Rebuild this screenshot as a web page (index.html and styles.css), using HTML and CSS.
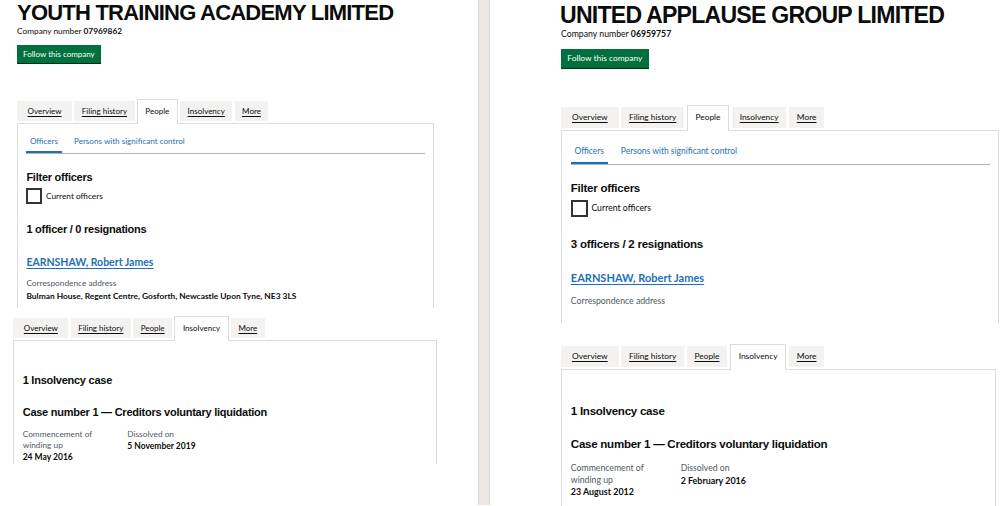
FILE: index.html
```html
<!DOCTYPE html>
<html lang="en">
<head>
<meta charset="utf-8">
<title>Companies House – officers and insolvency</title>
<link rel="stylesheet" href="styles.css">
</head>
<body>
<div class="col col-left">
  <section class="shot shot-a">
    <h1 class="company-name">YOUTH TRAINING ACADEMY LIMITED</h1>
    <p class="company-number">Company number <strong>07969862</strong></p>
    <a class="btn" href="#">Follow this company</a>
    <nav class="tabs">
      <a class="tab" href="#">Overview</a>
      <a class="tab" href="#">Filing history</a>
      <span class="tab active">People</span>
      <a class="tab" href="#">Insolvency</a>
      <a class="tab" href="#">More</a>
    </nav>
    <div class="panel">
      <div class="subtabs">
        <span class="subtab active">Officers</span>
        <a class="subtab" href="#">Persons with significant control</a>
      </div>
      <h2 class="heading filter">Filter officers</h2>
      <label class="check"><span class="box"></span>Current officers</label>
      <h2 class="heading count">1 officer / 0 resignations</h2>
      <a class="officer" href="#">EARNSHAW, Robert James</a>
      <p class="label addr-label">Correspondence address</p>
      <p class="value addr">Bulman House, Regent Centre, Gosforth, Newcastle Upon Tyne, NE3 3LS</p>
    </div>
  </section>
  <section class="shot shot-b">
    <nav class="tabs">
      <a class="tab" href="#">Overview</a>
      <a class="tab" href="#">Filing history</a>
      <a class="tab" href="#">People</a>
      <span class="tab active">Insolvency</span>
      <a class="tab" href="#">More</a>
    </nav>
    <div class="panel">
      <h2 class="heading case-count">1 Insolvency case</h2>
      <h2 class="heading case-title">Case number 1 — Creditors voluntary liquidation</h2>
      <div class="dates">
        <dl class="date date-first">
          <dt>Commencement of winding up</dt>
          <dd>24 May 2016</dd>
        </dl>
        <dl class="date">
          <dt>Dissolved on</dt>
          <dd>5 November 2019</dd>
        </dl>
      </div>
    </div>
  </section>
</div>
<div class="divider"></div>
<div class="col col-right">
  <section class="shot shot-a">
    <h1 class="company-name">UNITED APPLAUSE GROUP LIMITED</h1>
    <p class="company-number">Company number <strong>06959757</strong></p>
    <a class="btn" href="#">Follow this company</a>
    <nav class="tabs">
      <a class="tab" href="#">Overview</a>
      <a class="tab" href="#">Filing history</a>
      <span class="tab active">People</span>
      <a class="tab" href="#">Insolvency</a>
      <a class="tab" href="#">More</a>
    </nav>
    <div class="panel">
      <div class="subtabs">
        <span class="subtab active">Officers</span>
        <a class="subtab" href="#">Persons with significant control</a>
      </div>
      <h2 class="heading filter">Filter officers</h2>
      <label class="check"><span class="box"></span>Current officers</label>
      <h2 class="heading count">3 officers / 2 resignations</h2>
      <a class="officer" href="#">EARNSHAW, Robert James</a>
      <p class="label addr-label">Correspondence address</p>
    </div>
  </section>
  <section class="shot shot-b">
    <nav class="tabs">
      <a class="tab" href="#">Overview</a>
      <a class="tab" href="#">Filing history</a>
      <a class="tab" href="#">People</a>
      <span class="tab active">Insolvency</span>
      <a class="tab" href="#">More</a>
    </nav>
    <div class="panel">
      <h2 class="heading case-count">1 Insolvency case</h2>
      <h2 class="heading case-title">Case number 1 — Creditors voluntary liquidation</h2>
      <div class="dates">
        <dl class="date date-first">
          <dt>Commencement of winding up</dt>
          <dd>23 August 2012</dd>
        </dl>
        <dl class="date">
          <dt>Dissolved on</dt>
          <dd>2 February 2016</dd>
        </dl>
      </div>
    </div>
  </section>
</div>
</body>
</html>
```

FILE: styles.css
```css
* { box-sizing: border-box; }
html, body { margin: 0; padding: 0; }
body {
  width: 1000px;
  height: 506px;
  overflow: hidden;
  display: flex;
  align-items: flex-start;
  background: #fff;
  color: #0b0c0c;
  font-family: Lato, "Open Sans", "Liberation Sans", sans-serif;
}
h1, h2, p, dl, dd { margin: 0; }
a { color: inherit; }

.col { display: flex; flex-direction: column; height: 506px; flex: none; }
.col-left { width: 478px; --u: 1px; }
.col-right { width: 510px; --u: 1.05px; }
.divider {
  width: 12px;
  height: 505px;
  flex: none;
  background: #ede8e6;
  border-left: 1px solid #dcd7d5;
  border-right: 1px solid #dcd7d5;
}

.shot {
  overflow: hidden;
  flex: none;
  display: flex;
  flex-direction: column;
  align-items: flex-start;
}
.shot-a { height: 307.5px; padding: 0 44px 0 17px; }
.shot-b { height: 156px; padding: 8.3px 41.3px 0 13.3px; }
.col-right .shot-a { height: 322.7px; padding: 0 0.7px 0 71px; }
.col-right .shot-b { height: auto; flex: 1; padding: 21.3px 4px 0 71px; }

.company-name {
  font-family: "Liberation Sans", Arial, sans-serif;
  font-weight: 700;
  font-size: calc(22 * var(--u));
  letter-spacing: -0.78px;
  line-height: calc(24 * var(--u));
  margin-top: 1px;
  white-space: nowrap;
}
.col-right .company-name { margin-top: 2.7px; margin-left: -1px; }

.company-number {
  font-size: calc(8.3 * var(--u));
  line-height: calc(10 * var(--u));
  margin-top: calc(1 * var(--u));
}
.company-number strong { font-weight: 700; }

.btn {
  display: block;
  margin-top: calc(9.3 * var(--u));
  height: calc(18 * var(--u));
  line-height: calc(18 * var(--u));
  padding: 0 calc(6 * var(--u));
  background: #00703c;
  color: #fff;
  text-decoration: none;
  font-size: calc(8 * var(--u));
  box-shadow: 0 1px 0 #002d18;
}

.tabs {
  display: flex;
  gap: calc(2.3 * var(--u));
  height: calc(24 * var(--u));
  margin-top: calc(35.4 * var(--u));
}
.shot-b .tabs { margin-top: 0; }
.tab {
  margin-top: calc(2 * var(--u));
  height: calc(20 * var(--u));
  line-height: calc(20 * var(--u));
  padding: 0 calc(7.5 * var(--u));
  background: #f3f2f1;
  font-size: calc(8 * var(--u));
  color: #0b0c0c;
  text-decoration: underline;
  text-decoration-thickness: 1px;
  text-underline-offset: calc(1.5 * var(--u));
  white-space: nowrap;
}
.tab:first-child { padding: 0 calc(10.5 * var(--u)); }
.tab.active {
  margin-top: 0;
  height: calc(25 * var(--u));
  padding-top: calc(1 * var(--u));
  background: #fff;
  border: 1px solid #dcdcdc;
  border-bottom: 0;
  text-decoration: none;
  position: relative;
  z-index: 1;
}

.panel {
  align-self: stretch;
  flex: 1;
  border: 1px solid #dcdcdc;
  border-bottom: 0;
  padding: 0 calc(8.4 * var(--u));
}

.subtabs {
  display: flex;
  gap: calc(9 * var(--u));
  border-bottom: 1px solid #b1b4b6;
  margin-top: calc(12.8 * var(--u));
}
.col-right .subtabs { margin-top: 15px; }
.subtab {
  padding: 0 calc(3.5 * var(--u)) calc(5 * var(--u));
  font-size: calc(8.1 * var(--u));
  line-height: calc(10 * var(--u));
  color: #1d70b8;
  text-decoration: none;
  border-bottom: calc(2 * var(--u)) solid transparent;
}
.subtab.active { border-bottom-color: #1d70b8; }

.heading {
  font-family: "Liberation Sans", Arial, sans-serif;
  font-weight: 700;
  font-size: calc(11 * var(--u));
  line-height: calc(13 * var(--u));
  letter-spacing: calc(-0.25 * var(--u));
  white-space: nowrap;
}
.filter { margin-top: calc(16.7 * var(--u)); }
.col-right .filter { margin-top: 17px; }
.count { margin-top: calc(18.9 * var(--u)); }
.col-right .count { margin-top: 21px; }

.check {
  display: flex;
  align-items: center;
  gap: calc(3.6 * var(--u));
  margin-top: calc(4.3 * var(--u));
  font-size: calc(8.3 * var(--u));
  line-height: calc(10 * var(--u));
}
.box {
  width: calc(16 * var(--u));
  height: calc(16 * var(--u));
  border: 2px solid #333;
  flex: none;
}

.officer {
  display: block;
  width: fit-content;
  margin-top: calc(19.6 * var(--u));
  font-size: calc(10.5 * var(--u));
  line-height: calc(12 * var(--u));
  font-weight: 700;
  color: #1d70b8;
  text-decoration: underline;
  text-decoration-thickness: 1px;
  text-underline-offset: calc(1.5 * var(--u));
}

.label {
  font-size: calc(8.3 * var(--u));
  line-height: calc(10 * var(--u));
  color: #505a5f;
}
.addr-label { margin-top: calc(10.5 * var(--u)); }
.value {
  font-size: calc(8.4 * var(--u));
  line-height: calc(10 * var(--u));
  font-weight: 700;
  white-space: nowrap;
}
.addr { margin-top: calc(3 * var(--u)); }

.case-count { margin-top: calc(32.9 * var(--u)); }
.case-title { margin-top: 19.7px; }

.dates { display: flex; margin-top: calc(9.6 * var(--u)); }
.date { flex: none; }
.date-first { width: calc(104.6 * var(--u)); }
.date dt {
  max-width: calc(85 * var(--u));
  font-size: calc(8.3 * var(--u));
  line-height: calc(11.2 * var(--u));
  color: #505a5f;
}
.date dd {
  font-size: calc(8.5 * var(--u));
  line-height: calc(12.5 * var(--u));
  font-weight: 700;
  white-space: nowrap;
}
```
